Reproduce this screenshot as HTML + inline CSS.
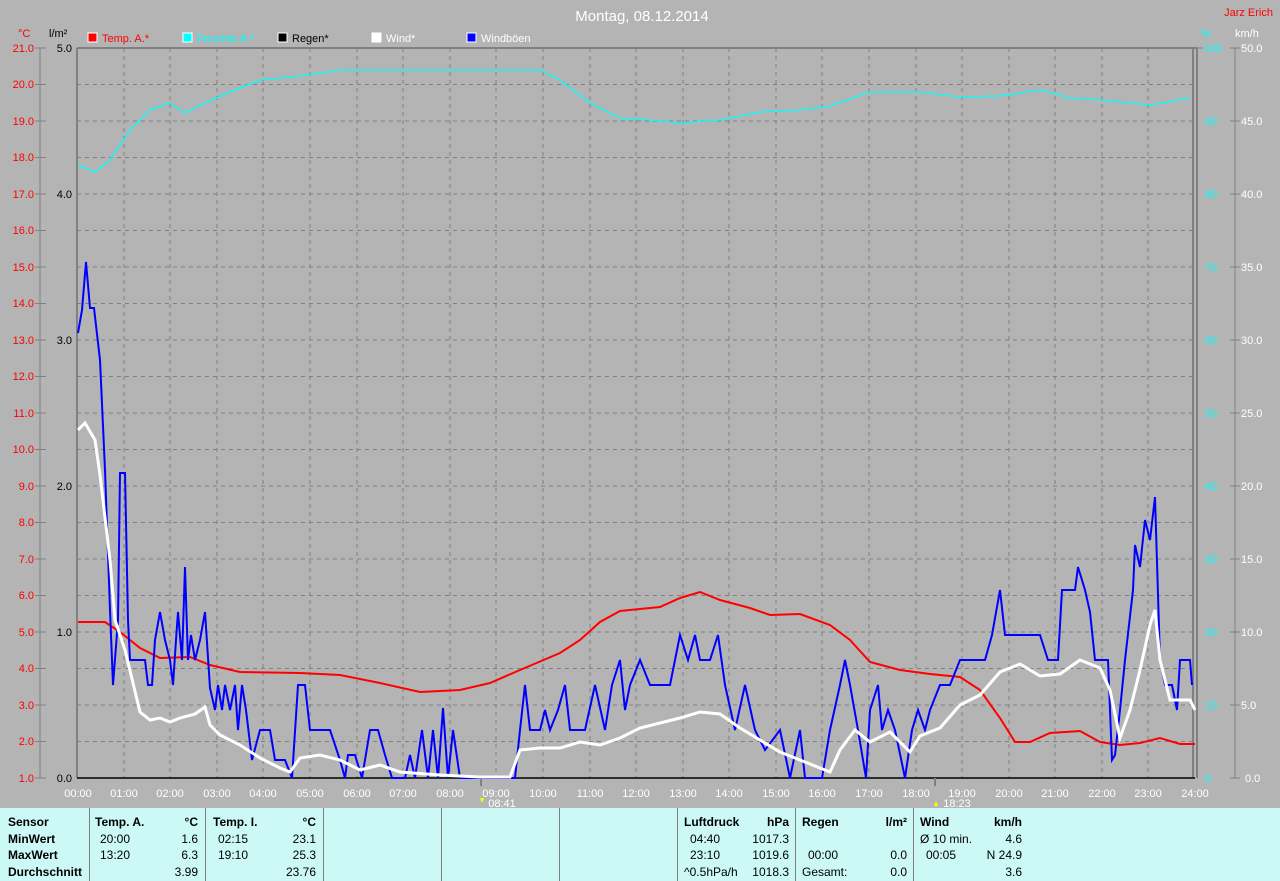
<!DOCTYPE html>
<html><head><meta charset="utf-8"><style>
body{margin:0;background:#b4b4b4;width:1280px;height:881px;overflow:hidden;font-family:"Liberation Sans",sans-serif}
svg{position:absolute;left:0;top:0}
.t{position:absolute;top:808px;left:0;width:1280px;height:73px;background:#ccf8f5;font-size:12px;color:#000}
.t div{position:absolute;white-space:nowrap}
.b{font-weight:bold}
.v{position:absolute;top:0;width:1px;height:73px;background:#808080}
</style></head><body>
<svg width="1280" height="808" font-family="Liberation Sans, sans-serif" font-size="11">
<text x="642" y="21" fill="#fff" font-size="15" text-anchor="middle">Montag, 08.12.2014</text>
<text x="1273" y="16" fill="#f00" font-size="11" text-anchor="end">Jarz Erich</text>
<text x="18" y="37" fill="#f00">°C</text><text x="49" y="37" fill="#000">l/m²</text>
<rect x="88" y="33" width="9" height="9" fill="#f00" stroke="#fff"/><text x="102" y="42" fill="#f00">Temp. A.*</text>
<rect x="183" y="33" width="9" height="9" fill="#0ff" stroke="#fff"/><text x="197" y="42" fill="#0ff">Feuchte A.*</text>
<rect x="278" y="33" width="9" height="9" fill="#000" stroke="#fff"/><text x="292" y="42" fill="#000">Regen*</text>
<rect x="372" y="33" width="9" height="9" fill="#fff" stroke="#fff"/><text x="386" y="42" fill="#fff">Wind*</text>
<rect x="467" y="33" width="9" height="9" fill="#00f" stroke="#fff"/><text x="481" y="42" fill="#fff">Windböen</text>
<text x="1201" y="37" fill="#0ff">%</text><text x="1235" y="37" fill="#fff">km/h</text>
<g stroke="#808080" stroke-dasharray="4,4" stroke-width="1">
<path d="M124 48V778M170 48V778M217 48V778M263 48V778M310 48V778M357 48V778M403 48V778M450 48V778M496 48V778M543 48V778M590 48V778M636 48V778M683 48V778M729 48V778M776 48V778M822 48V778M869 48V778M916 48V778M962 48V778M1009 48V778M1055 48V778M1102 48V778M1148 48V778"/>
<path d="M77 741.5H1195M77 705H1195M77 668.5H1195M77 632H1195M77 595.5H1195M77 559H1195M77 522.5H1195M77 486H1195M77 449.5H1195M77 413H1195M77 376.5H1195M77 340H1195M77 303.5H1195M77 267H1195M77 230.5H1195M77 194H1195M77 157.5H1195M77 121H1195M77 84.5H1195"/>
</g>
<path d="M77 48H1197M77 48V778" stroke="#808080" stroke-width="2" fill="none"/>
<path d="M1193 48V778M1197 48V778" stroke="#808080" stroke-width="2"/>
<path d="M77 778H1195" stroke="#000" stroke-width="1.5"/>
<path d="M40 48V778M1235 48V778" stroke="#808080"/>
<g fill="#f00" text-anchor="end">
<text x="34" y="52">21.0</text><text x="34" y="88">20.0</text><text x="34" y="125">19.0</text><text x="34" y="161">18.0</text><text x="34" y="198">17.0</text><text x="34" y="234">16.0</text><text x="34" y="271">15.0</text><text x="34" y="307">14.0</text><text x="34" y="344">13.0</text><text x="34" y="380">12.0</text><text x="34" y="417">11.0</text><text x="34" y="453">10.0</text><text x="34" y="490">9.0</text><text x="34" y="526">8.0</text><text x="34" y="563">7.0</text><text x="34" y="599">6.0</text><text x="34" y="636">5.0</text><text x="34" y="672">4.0</text><text x="34" y="709">3.0</text><text x="34" y="745">2.0</text><text x="34" y="782">1.0</text>
</g>
<g stroke="#808080"><path d="M35 48H46M35 84.5H46M35 121H46M35 157.5H46M35 194H46M35 230.5H46M35 267H46M35 303.5H46M35 340H46M35 376.5H46M35 413H46M35 449.5H46M35 486H46M35 522.5H46M35 559H46M35 595.5H46M35 632H46M35 668.5H46M35 705H46M35 741.5H46M35 778H46M1230 48H1240M1230 121H1240M1230 194H1240M1230 267H1240M1230 340H1240M1230 413H1240M1230 486H1240M1230 559H1240M1230 632H1240M1230 705H1240M1230 778H1240M1197 48H1203"/></g>
<g fill="#000" text-anchor="end">
<text x="72" y="52">5.0</text><text x="72" y="198">4.0</text><text x="72" y="344">3.0</text><text x="72" y="490">2.0</text><text x="72" y="636">1.0</text><text x="72" y="782">0.0</text>
</g>
<g fill="#0ff">
<text x="1203" y="52">100</text><text x="1205" y="125">90</text><text x="1205" y="198">80</text><text x="1205" y="271">70</text><text x="1205" y="344">60</text><text x="1205" y="417">50</text><text x="1205" y="490">40</text><text x="1205" y="563">30</text><text x="1205" y="636">20</text><text x="1205" y="709">10</text><text x="1205" y="782">0</text>
</g>
<g fill="#fff">
<text x="1241" y="52">50.0</text><text x="1241" y="125">45.0</text><text x="1241" y="198">40.0</text><text x="1241" y="271">35.0</text><text x="1241" y="344">30.0</text><text x="1241" y="417">25.0</text><text x="1241" y="490">20.0</text><text x="1241" y="563">15.0</text><text x="1241" y="636">10.0</text><text x="1241" y="709">5.0</text><text x="1245" y="782">0.0</text>
</g>
<g fill="#fff" text-anchor="middle">
<text x="78" y="797">00:00</text><text x="124" y="797">01:00</text><text x="170" y="797">02:00</text><text x="217" y="797">03:00</text><text x="263" y="797">04:00</text><text x="310" y="797">05:00</text><text x="357" y="797">06:00</text><text x="403" y="797">07:00</text><text x="450" y="797">08:00</text><text x="496" y="797">09:00</text><text x="543" y="797">10:00</text><text x="590" y="797">11:00</text><text x="636" y="797">12:00</text><text x="683" y="797">13:00</text><text x="729" y="797">14:00</text><text x="776" y="797">15:00</text><text x="822" y="797">16:00</text><text x="869" y="797">17:00</text><text x="916" y="797">18:00</text><text x="962" y="797">19:00</text><text x="1009" y="797">20:00</text><text x="1055" y="797">21:00</text><text x="1102" y="797">22:00</text><text x="1148" y="797">23:00</text><text x="1195" y="797">24:00</text>
<text x="502" y="807">08:41</text><text x="957" y="807">18:23</text>
</g>
<path d="M481 778V786M935 778V786" stroke="#808080" stroke-width="2"/>
<path d="M480 798h4l-2 5z" fill="#ff0"/><path d="M934 806h4l-2-5z" fill="#ff0"/>
<polyline fill="none" stroke="#0ff" stroke-width="1.3" points="78,165 95,172 110,160 130,130 150,110 170,103 185,113 200,105 230,92 260,80 300,76 340,70 400,70 540,70 560,80 590,103 620,118 650,120 680,123 720,120 760,112 800,110 830,106 870,92 920,92 960,97 1000,96 1040,90 1070,98 1100,100 1150,105 1190,98"/>
<polyline fill="none" stroke="#f00" stroke-width="2" points="78,622 105,622 120,632 140,648 160,658 190,657 210,665 240,672 300,673 340,675 380,683 420,692 460,690 490,683 520,670 560,653 580,640 600,622 620,611 660,607 680,598 700,592 720,600 750,608 770,615 800,614 830,625 850,640 870,662 900,670 930,674 960,677 980,690 1000,718 1015,742 1030,742 1050,733 1080,731 1100,742 1120,745 1140,743 1160,738 1180,744 1195,744"/>
<polyline fill="none" stroke="#00f" stroke-width="2" points="78,333 82,310 86,262 90,308 94,308 100,360 105,470 110,610 113,685 118,620 120,473 125,473 128,620 130,660 145,660 148,685 152,685 155,640 160,612 165,640 170,660 173,685 176,640 178,612 182,660 185,567 188,660 191,635 195,660 200,640 205,612 210,688 215,710 218,685 222,710 225,685 230,710 235,685 238,730 242,685 246,710 252,760 260,730 270,730 275,760 285,760 292,778 298,685 305,685 310,730 330,730 340,760 345,778 348,755 355,755 362,778 370,730 378,730 385,755 392,778 405,778 410,755 415,778 422,730 428,778 433,730 438,778 443,708 448,778 453,730 460,778 490,778 515,778 520,730 525,685 530,730 540,730 545,710 550,730 558,710 565,685 570,730 585,730 595,685 605,730 612,685 620,660 625,710 630,685 640,660 650,685 670,685 680,635 688,660 695,635 700,660 710,660 718,635 725,685 735,730 745,685 755,730 765,750 780,730 790,778 800,730 805,778 822,778 830,730 840,685 845,660 850,685 858,730 866,778 870,710 878,685 882,730 888,710 895,730 905,778 912,730 918,710 925,730 930,710 940,685 950,685 960,660 985,660 992,635 1000,590 1005,635 1040,635 1048,660 1058,660 1062,590 1075,590 1078,567 1085,590 1090,612 1095,660 1108,660 1112,760 1115,755 1120,710 1125,660 1133,590 1135,545 1140,567 1145,520 1150,540 1155,497 1160,660 1165,685 1172,685 1177,710 1180,660 1190,660 1192,685"/>
<polyline fill="none" stroke="#fff" stroke-width="3" points="78,430 85,423 95,440 100,475 110,560 115,620 125,650 140,712 150,720 160,718 170,722 180,718 195,714 205,707 210,725 220,735 240,745 260,758 280,768 290,772 300,758 320,755 340,760 360,770 380,765 400,772 440,775 480,777 510,777 520,750 540,748 560,748 580,742 600,745 620,738 640,728 680,718 700,712 720,714 740,728 760,740 780,752 800,760 820,768 830,772 840,750 855,730 870,742 890,732 910,752 920,736 940,728 960,705 980,695 1000,672 1020,664 1040,676 1060,674 1080,660 1100,668 1110,690 1120,738 1130,710 1140,670 1150,625 1155,610 1160,660 1170,700 1190,700 1195,710"/>
</svg>
<div class="t">
<div class="v" style="left:89px"></div><div class="v" style="left:205px"></div><div class="v" style="left:323px"></div><div class="v" style="left:441px"></div><div class="v" style="left:559px"></div><div class="v" style="left:677px"></div><div class="v" style="left:795px"></div><div class="v" style="left:913px"></div>
<div class="b" style="left:8px;top:7px">Sensor</div><div class="b" style="left:8px;top:24px">MinWert</div><div class="b" style="left:8px;top:40px">MaxWert</div><div class="b" style="left:8px;top:57px">Durchschnitt</div>
<div class="b" style="left:95px;top:7px">Temp. A.</div><div class="b" style="right:1082px;top:7px">°C</div>
<div style="left:100px;top:24px">20:00</div><div style="right:1082px;top:24px">1.6</div>
<div style="left:100px;top:40px">13:20</div><div style="right:1082px;top:40px">6.3</div>
<div style="right:1082px;top:57px">3.99</div>
<div class="b" style="left:213px;top:7px">Temp. I.</div><div class="b" style="right:964px;top:7px">°C</div>
<div style="left:218px;top:24px">02:15</div><div style="right:964px;top:24px">23.1</div>
<div style="left:218px;top:40px">19:10</div><div style="right:964px;top:40px">25.3</div>
<div style="right:964px;top:57px">23.76</div>
<div class="b" style="left:684px;top:7px">Luftdruck</div><div class="b" style="right:491px;top:7px">hPa</div>
<div style="left:690px;top:24px">04:40</div><div style="right:491px;top:24px">1017.3</div>
<div style="left:690px;top:40px">23:10</div><div style="right:491px;top:40px">1019.6</div>
<div style="left:684px;top:57px">^0.5hPa/h</div><div style="right:491px;top:57px">1018.3</div>
<div class="b" style="left:802px;top:7px">Regen</div><div class="b" style="right:373px;top:7px">l/m²</div>
<div style="left:808px;top:40px">00:00</div><div style="right:373px;top:40px">0.0</div>
<div style="left:802px;top:57px">Gesamt:</div><div style="right:373px;top:57px">0.0</div>
<div class="b" style="left:920px;top:7px">Wind</div><div class="b" style="right:258px;top:7px">km/h</div>
<div style="left:920px;top:24px">Ø 10 min.</div><div style="right:258px;top:24px">4.6</div>
<div style="left:926px;top:40px">00:05</div><div style="right:258px;top:40px">N 24.9</div>
<div style="right:258px;top:57px">3.6</div>
</div>
</body></html>
